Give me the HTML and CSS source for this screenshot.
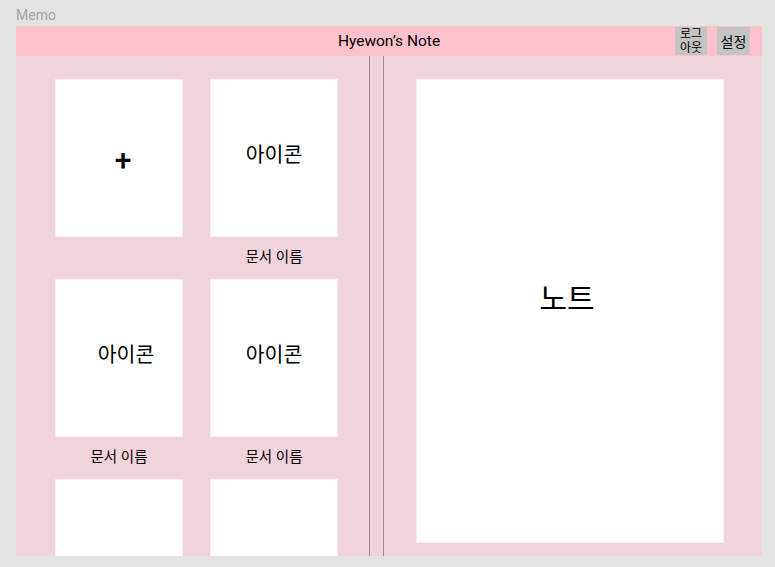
FILE: index.html
```html
<!DOCTYPE html>
<html lang="ko">
<head>
    <meta charset="UTF-8">
    <meta name="viewport" content="width=device-width, initial-scale=1.0">
    <title>Memo</title>
    <link rel="stylesheet" href="styles.css">
</head>
<body>
    <div class="frame-title">Memo</div>
    <div class="frame">
        <header class="top-bar">
            <div></div>
            <div class="title">Hyewon’s Note</div>
            <div class="top-buttons">
                <button class="btn btn-small">로그<br>아웃</button>
                <button class="btn">설정</button>
            </div>
        </header>

        <main class="content">
            <section class="doc-list">
                <div class="doc">
                    <div class="doc-card plus">+</div>
                    <div class="doc-name"></div>
                </div>
                <div class="doc">
                    <div class="doc-card">아이콘</div>
                    <div class="doc-name">문서 이름</div>
                </div>
                <div class="doc">
                    <div class="doc-card shift">아이콘</div>
                    <div class="doc-name">문서 이름</div>
                </div>
                <div class="doc">
                    <div class="doc-card">아이콘</div>
                    <div class="doc-name">문서 이름</div>
                </div>
                <div class="doc">
                    <div class="doc-card"></div>
                </div>
                <div class="doc">
                    <div class="doc-card"></div>
                </div>
            </section>

            <div class="divider"></div>

            <section class="note-area">
                <div class="note">노트</div>
            </section>
        </main>
    </div>
</body>
</html>
```

FILE: styles.css
```css
*{
    box-sizing: border-box;
    font-family: Roboto, "Noto Sans CJK KR", sans-serif;
}
body{
    margin: 0;
    background-color: #e3e3e3;
    width: 775px;
    height: 567px;
    overflow: hidden;
}
.frame-title{
    padding: 7px 0 0 16px;
    height: 26px;
    font-size: 14px;
    color: #a3a3a3;
}
.frame{
    margin-left: 16px;
    width: 746px;
    height: 530px;
    background-color: #f1d3db;
    display: flex;
    flex-direction: column;
}
.top-bar{
    height: 30px;
    background-color: #ffc2cd;
    display: grid;
    grid-template-columns: 1fr auto 1fr;
    align-items: center;
}
.title{
    font-size: 15.5px;
    color: #000;
}
.top-buttons{
    display: flex;
    justify-content: flex-end;
    gap: 10px;
    padding-right: 12px;
    align-self: start;
    padding-top: 1px;
}
.btn{
    border: none;
    background-color: #c4c4c4;
    height: 28px;
    width: 33px;
    padding: 0;
    font-size: 14px;
    color: #000;
}
.btn-small{
    width: 32px;
    font-size: 12px;
    line-height: 14px;
}
.content{
    flex: 1;
    display: flex;
    overflow: hidden;
}
.doc-list{
    width: 353px;
    padding: 23px 0 0 39px;
    display: grid;
    grid-template-columns: 128px 128px;
    grid-auto-rows: 200px;
    column-gap: 27px;
    overflow: hidden;
}
.doc-card{
    height: 158px;
    background-color: #fff;
    border: 1px solid #fbeef1;
    display: flex;
    align-items: center;
    justify-content: center;
    font-size: 20.5px;
    padding-bottom: 10px;
    color: #000;
}
.doc-card.shift{
    padding-left: 14px;
}
.doc-card.plus{
    font-size: 30px;
    font-weight: 500;
    padding: 3px 0 0 8px;
}
.doc-name{
    height: 42px;
    line-height: 42px;
    text-align: center;
    font-size: 14.5px;
    color: #000;
}
.divider{
    width: 15px;
    border-left: 1px solid #9d8a8f;
    border-right: 1px solid #9d8a8f;
}
.note-area{
    flex: 1;
    padding: 23px 38px 13px 32px;
}
.note{
    height: 464px;
    background-color: #fff;
    border: 1px solid #fbeef1;
    display: flex;
    align-items: center;
    justify-content: center;
    font-size: 30px;
    padding: 0 6px 30px 0;
    color: #000;
}
```
